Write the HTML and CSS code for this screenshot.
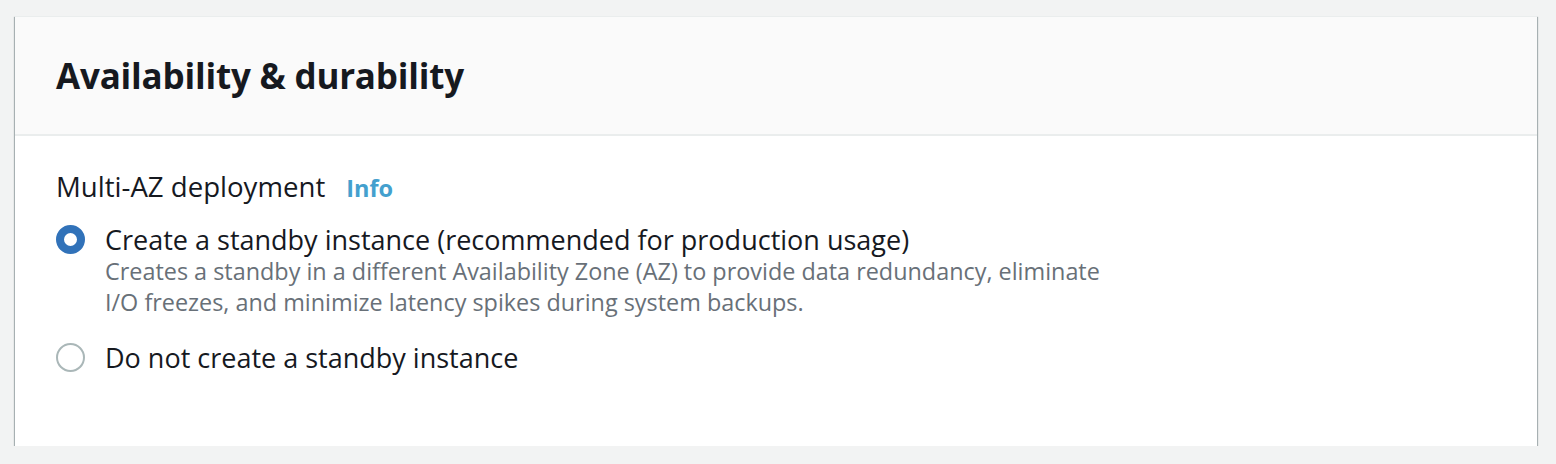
FILE: index.html
```html
<!DOCTYPE html>
<html lang="en">
<head>
<meta charset="utf-8">
<title>Availability &amp; durability</title>
<link rel="stylesheet" href="styles.css">
</head>
<body>
<div class="card">
  <div class="card-header">
    <h2 class="card-title">Availability &amp; durability</h2>
  </div>
  <div class="card-body">
    <div class="field-label">
      <span class="label-text">Multi-AZ deployment</span>
      <a class="info-link" href="#">Info</a>
    </div>
    <div class="radio-group">
      <div class="radio-option">
        <span class="radio checked"></span>
        <div class="radio-content">
          <div class="radio-label">Create a standby instance (recommended for production usage)</div>
          <div class="radio-desc">Creates a standby in a different Availability Zone (AZ) to provide data redundancy, eliminate<br>I/O freezes, and minimize latency spikes during system backups.</div>
        </div>
      </div>
      <div class="radio-option">
        <span class="radio"></span>
        <div class="radio-content">
          <div class="radio-label">Do not create a standby instance</div>
        </div>
      </div>
    </div>
  </div>
</div>
</body>
</html>
```

FILE: styles.css
```css
html, body {
  margin: 0;
  padding: 0;
}
body {
  background: #f2f3f3;
  font-family: "Open Sans", "Noto Sans", sans-serif;
  color: #16191f;
  padding: 16px 19px 0 15px;
}
.card {
  background: #ffffff;
  border-top: 1px solid #eaeded;
  box-shadow: 0 1px 1px 0 rgba(0, 28, 36, 0.45), 1px 1px 1px 0 rgba(0, 28, 36, 0.25), -1px 1px 1px 0 rgba(0, 28, 36, 0.25);
}
.card-header {
  background: #fafafa;
  border-bottom: 2px solid #eaeded;
  height: 119px;
  box-sizing: border-box;
  padding: 0 41px;
  display: flex;
  align-items: center;
}
.card-title {
  margin: 0;
  font-size: 35px;
  font-weight: 700;
  line-height: 40px;
  letter-spacing: -0.2px;
  color: #16191f;
}
.card-body {
  height: 310px;
  box-sizing: border-box;
  padding: 33px 41px 0;
}
.field-label {
  display: flex;
  align-items: baseline;
  gap: 21px;
  line-height: 34px;
}
.label-text {
  font-size: 27.6px;
}
.info-link {
  font-size: 23.5px;
  font-weight: 700;
  color: #44a0ce;
  text-decoration: none;
}
.radio-group {
  display: flex;
  flex-direction: column;
  gap: 24px;
  margin-top: 19px;
}
.radio-option {
  display: flex;
  align-items: flex-start;
  gap: 20px;
}
.radio {
  flex: none;
  width: 29px;
  height: 29px;
  box-sizing: border-box;
  border-radius: 50%;
  border: 2px solid #aab7b8;
  margin-top: 1px;
}
.radio.checked {
  border: 8px solid #3172b9;
}
.radio-label {
  font-size: 27px;
  line-height: 32px;
}
.radio-desc {
  font-size: 23.4px;
  line-height: 31px;
  color: #687078;
  margin-top: 0;
}
```
